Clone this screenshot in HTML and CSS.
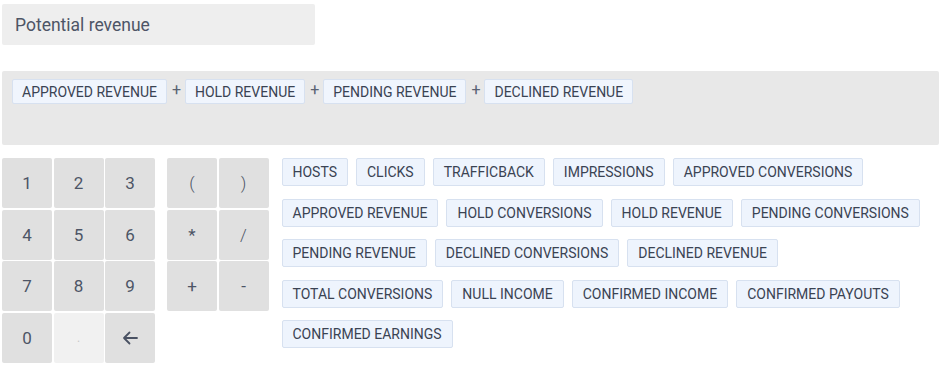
FILE: index.html
```html
<!DOCTYPE html>
<html>
<head>
<meta charset="utf-8">
<link rel="stylesheet" href="styles.css">
</head>
<body>
<div class="page">
  <div class="name-input">Potential revenue</div>
  <div class="formula">
    <span class="chip chip-f">APPROVED REVENUE</span>
    <span class="op">+</span>
    <span class="chip chip-f">HOLD REVENUE</span>
    <span class="op">+</span>
    <span class="chip chip-f">PENDING REVENUE</span>
    <span class="op">+</span>
    <span class="chip chip-f">DECLINED REVENUE</span>
  </div>
  <div class="editor">
    <div class="keypad digits">
      <div class="key">1</div><div class="key">2</div><div class="key">3</div>
      <div class="key">4</div><div class="key">5</div><div class="key">6</div>
      <div class="key">7</div><div class="key">8</div><div class="key">9</div>
      <div class="key">0</div><div class="key key-disabled">.</div>
      <div class="key"><svg width="16" height="14" viewBox="0 0 16 14"><path d="M15 7H2M7.5 1.5L2 7l5.5 5.5" fill="none" stroke="#4a5263" stroke-width="1.8" stroke-linecap="round" stroke-linejoin="round"/></svg></div>
    </div>
    <div class="keypad ops">
      <div class="key key-thin">(</div><div class="key key-thin">)</div>
      <div class="key">*</div><div class="key key-thin">/</div>
      <div class="key">+</div><div class="key">-</div>
    </div>
    <div class="fields">
      <span class="chip">HOSTS</span>
      <span class="chip">CLICKS</span>
      <span class="chip">TRAFFICBACK</span>
      <span class="chip">IMPRESSIONS</span>
      <span class="chip">APPROVED CONVERSIONS</span>
      <span class="chip">APPROVED REVENUE</span>
      <span class="chip">HOLD CONVERSIONS</span>
      <span class="chip">HOLD REVENUE</span>
      <span class="chip">PENDING CONVERSIONS</span>
      <span class="chip">PENDING REVENUE</span>
      <span class="chip">DECLINED CONVERSIONS</span>
      <span class="chip">DECLINED REVENUE</span>
      <span class="chip">TOTAL CONVERSIONS</span>
      <span class="chip">NULL INCOME</span>
      <span class="chip">CONFIRMED INCOME</span>
      <span class="chip">CONFIRMED PAYOUTS</span>
      <span class="chip">CONFIRMED EARNINGS</span>
    </div>
  </div>
</div>
</body>
</html>
```
FILE: styles.css
```css
html, body {
  margin: 0;
  padding: 0;
  background: #ffffff;
}
body {
  font-family: Roboto, "Liberation Sans", sans-serif;
  color: #444c5c;
}
.page {
  padding: 4px 5px 0 2px;
}
.name-input {
  width: 313px;
  height: 41px;
  box-sizing: border-box;
  background: #eeeeee;
  border-radius: 2px;
  padding: 0 13px;
  display: flex;
  align-items: center;
  font-size: 17.5px;
  color: #4d5566;
}
.formula {
  margin-top: 26px;
  height: 74px;
  box-sizing: border-box;
  background: #e8e8e8;
  border-radius: 2px;
  padding: 8px 10px;
  display: flex;
  align-items: flex-start;
  gap: 5px;
}
.op {
  font-size: 16px;
  line-height: 22px;
  color: #5a6272;
  width: 8px;
  text-align: center;
}
.chip {
  display: inline-flex;
  align-items: center;
  box-sizing: border-box;
  height: 28px;
  padding: 0 10px;
  background: #eef4fd;
  border: 1px solid #d7e1f0;
  border-radius: 2px;
  font-size: 14px;
  color: #3a4353;
  white-space: nowrap;
}
.chip-f {
  height: 25px;
  padding: 0 9px;
  background: #f0f5fd;
}
.editor {
  margin-top: 13px;
  display: flex;
  align-items: flex-start;
}
.keypad {
  display: grid;
  grid-auto-rows: 50px;
  gap: 1.5px;
}
.digits {
  grid-template-columns: repeat(3, 50px);
}
.ops {
  margin-left: 12px;
  grid-template-columns: repeat(2, 50px);
}
.key {
  background: #e0e0e0;
  border-radius: 2px;
  display: flex;
  align-items: center;
  justify-content: center;
  font-size: 17px;
  color: #4d5566;
}
.key-thin {
  font-weight: 300;
}
.key-disabled {
  background: #f1f1f1;
  color: #c8c8c8;
  font-size: 12px;
}
.fields {
  margin-left: 13px;
  flex: 1;
  display: flex;
  flex-wrap: wrap;
  column-gap: 8px;
  row-gap: 12.5px;
  align-content: flex-start;
}
```
